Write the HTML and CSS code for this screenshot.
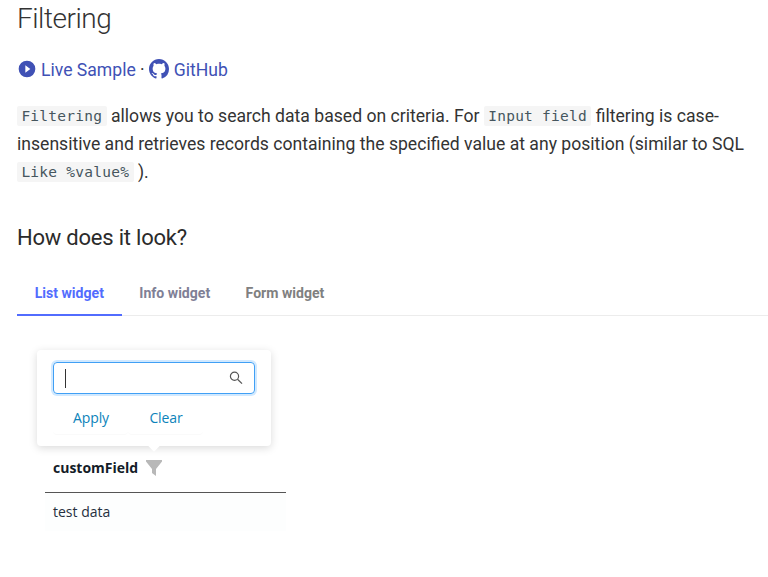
FILE: index.html
```
<!DOCTYPE html>
<html lang="en">
<head>
<meta charset="utf-8">
<title>Filtering</title>
<link rel="stylesheet" href="styles.css">
</head>
<body>
<main class="content">
  <h1>Filtering</h1>
  <p class="links">
    <a href="#"><svg class="play" viewBox="0 0 24 24"><path d="M10 16.5v-9l6 4.5M12 2A10 10 0 0 0 2 12a10 10 0 0 0 10 10 10 10 0 0 0 10-10A10 10 0 0 0 12 2z"/></svg><span class="sample">Live Sample</span></a><span class="dot">·</span><a href="#"><svg class="github" viewBox="0 0 16 16"><path d="M8 0C3.58 0 0 3.58 0 8c0 3.54 2.29 6.53 5.47 7.59.4.07.55-.17.55-.38 0-.19-.01-.82-.01-1.49-2.01.37-2.53-.49-2.69-.94-.09-.23-.48-.94-.82-1.13-.28-.15-.68-.52-.01-.53.63-.01 1.08.58 1.23.82.72 1.21 1.87.87 2.33.66.07-.52.28-.87.51-1.07-1.78-.2-3.64-.89-3.64-3.95 0-.87.31-1.59.82-2.15-.08-.2-.36-1.02.08-2.12 0 0 .67-.21 2.2.82.64-.18 1.32-.27 2-.27s1.36.09 2 .27c1.53-1.04 2.2-.82 2.2-.82.44 1.1.16 1.92.08 2.12.51.56.82 1.27.82 2.15 0 3.07-1.87 3.75-3.65 3.95.29.25.54.73.54 1.48 0 1.07-.01 1.93-.01 2.2 0 .21.15.46.55.38A8.01 8.01 0 0 0 16 8c0-4.42-3.58-8-8-8z"/></svg><span>GitHub</span></a>
  </p>
  <p class="intro"><code>Filtering</code> allows you to search data based on criteria. For <code>Input field</code> filtering is case-<br>insensitive and retrieves records containing the specified value at any position (similar to SQL<br><code>Like %value%</code> ).</p>
  <h2>How does it look?</h2>
  <nav class="tabs"><span class="tab active">List widget</span><span class="tab info">Info widget</span><span class="tab">Form widget</span></nav>
  <section class="demo">
    <div class="popover">
      <div class="search"><i class="caret"></i><svg viewBox="0 0 14 14"><circle cx="5.5" cy="5.3" r="4.1"/><path d="M8.5 8.3l4.5 4.3"/></svg></div>
      <div class="actions"><span>Apply</span><span>Clear</span></div>
    </div>
    <div class="table">
      <div class="head"><b>customField</b><svg viewBox="0 0 16 16"><path d="M0 0h16v1.5L10 9v7l-4-3V9L0 1.5z"/></svg></div>
      <div class="cell">test data</div>
    </div>
  </section>
</main>
</body>
</html>
```

FILE: styles.css
```
* { box-sizing: border-box; }
body {
  margin: 0;
  height: 577px;
  overflow: hidden;
  background: #fff;
  color: #333;
  font: 17.6px/28px Roboto, sans-serif;
}
.content { padding-left: 17px; }
h1 {
  margin: 0;
  height: 56px;
  padding-top: 1px;
  color: #333;
  font-size: 28px;
  line-height: 36px;
  font-weight: 300;
  letter-spacing: -.46px;
}
.links {
  display: flex;
  align-items: center;
  height: 28px;
  margin: 0 0 18px;
}
.links a {
  display: flex;
  align-items: center;
  color: #4051b5;
  text-decoration: none;
}
.links svg { position: relative; top: -1px; fill: currentColor; }
.play { width: 20px; height: 20px; margin-right: 4px; }
.github { width: 20px; height: 20px; margin-right: 5px; }
.dot { width: 13px; text-align: center; }
.intro { margin: 0; white-space: nowrap; }
code {
  display: inline-block;
  height: 20px;
  padding: 0 4.4px;
  border-radius: 2px;
  background: #f5f5f5;
  color: #46565e;
  font: 14.5px/20px "DejaVu Sans Mono", monospace;
  letter-spacing: .25px;
  vertical-align: 1px;
}
h2 {
  margin: 37px 0 26px;
  font-size: 22px;
  line-height: 30px;
  font-weight: 400;
  letter-spacing: -.22px;
  color: #2b2b2b;
}
.tabs {
  display: flex;
  height: 37px;
  border-bottom: 1px solid #ececec;
  font-size: 14.08px;
  font-weight: 700;
  line-height: 28px;
  color: #808080;
}
.tab { height: 37px; padding: 0 17.7px; }
.tab.active { color: #526cfe; border-bottom: 2px solid #526cfe; }
.tab.info { color: #7f8096; }
.demo {
  padding: 34px 0 0 20px;
  font-family: "Open Sans", "Noto Sans", sans-serif;
  font-size: 14px;
}
.popover {
  position: relative;
  width: 234px;
  height: 96px;
  padding: 12px 16px;
  border-radius: 4px;
  background: #fff;
  box-shadow: 0 2px 8px rgba(0, 0, 0, .15);
}
.popover::after {
  content: "";
  position: absolute;
  left: 113px;
  bottom: -4px;
  width: 8px;
  height: 8px;
  background: #fff;
  transform: rotate(45deg);
}
.search {
  display: flex;
  align-items: center;
  justify-content: space-between;
  width: 202px;
  height: 32px;
  padding: 0 11px;
  border: 1px solid #40a0f5;
  border-radius: 4px;
  box-shadow: 0 0 0 2px #d1e9ff;
}
.caret { width: 1px; height: 19px; background: #333; }
.search svg { width: 14px; height: 14px; fill: none; stroke: #555; stroke-width: 1.2; }
.actions { display: flex; padding-top: 8px; }
.actions span {
  width: 75px;
  height: 33px;
  border-bottom: 1px solid #fafafa;
  border-radius: 4px;
  color: #0c83ba;
  line-height: 31px;
  text-align: center;
  padding-left: 1px;
  letter-spacing: -.1px;
}
.table { width: 241px; margin-left: 8px; }
.head {
  display: flex;
  align-items: center;
  height: 47px;
  padding: 0 8px 3px;
  border-bottom: 1px solid #555;
  color: #141c28;
}
.head svg { width: 16px; height: 16px; margin-left: 8px; fill: #b8b8b8; }
.cell { height: 38px; padding-left: 8px; background: #fdfefe; line-height: 38px; color: #263040; }
```
